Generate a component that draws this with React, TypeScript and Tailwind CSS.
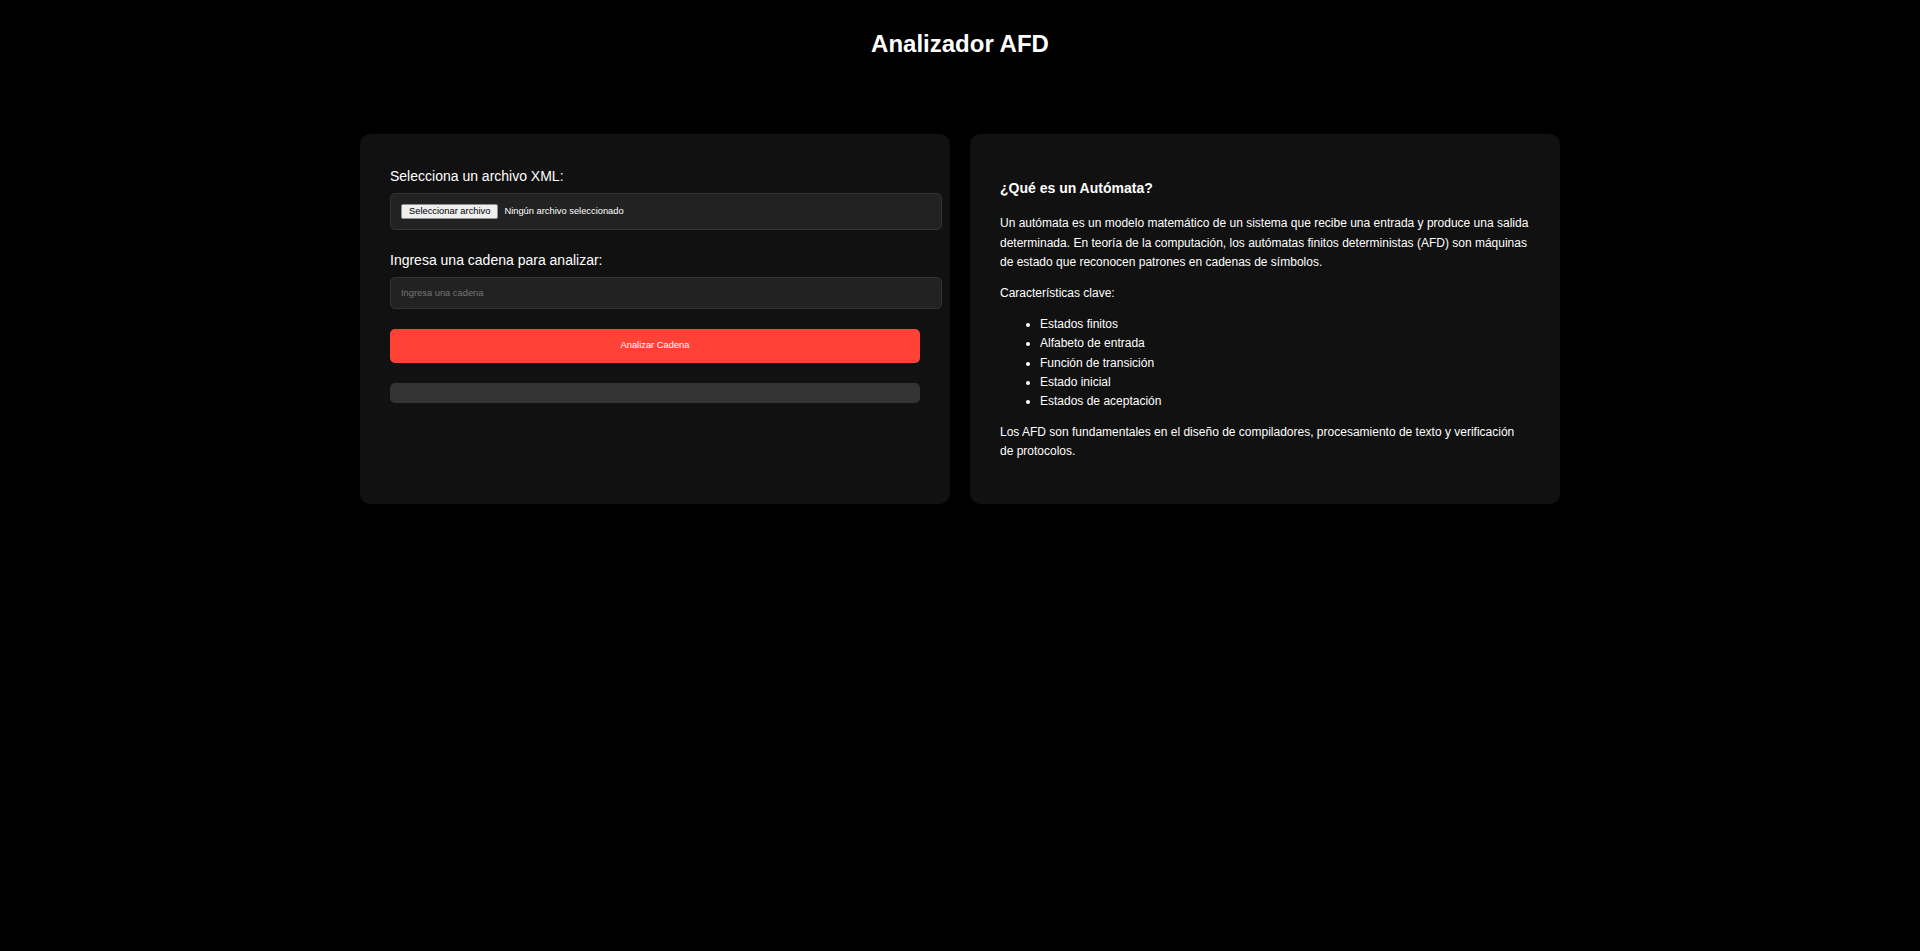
import { useState } from "react";

const features = [
  "Estados finitos",
  "Alfabeto de entrada",
  "Función de transición",
  "Estado inicial",
  "Estados de aceptación",
];

export default function App() {
  const [fileName, setFileName] = useState<string | null>(null);
  const [cadena, setCadena] = useState("");

  return (
    <div className="min-h-screen bg-black text-white font-['Liberation_Sans',Arial,sans-serif]">
      <h1 className="pt-[30px] text-center text-[24px] leading-[28px] font-bold">
        Analizador AFD
      </h1>

      <div className="mx-auto mt-[76px] grid max-w-[1200px] grid-cols-2 gap-[20px]">
        {/* Formulario */}
        <div className="rounded-[10px] bg-[#111111] px-[30px] pt-[32px] pb-[30px]">
          <div className="mb-[20px]">
            <label className="mb-[6px] block text-[14px] leading-[21px]">
              Selecciona un archivo XML:
            </label>
            <label className="box-border flex h-[37px] w-[552px] cursor-pointer items-center rounded-[5px] border border-[#333333] bg-[#222222] px-[10px]">
              <input
                type="file"
                accept=".xml"
                className="hidden"
                onChange={(e) => setFileName(e.target.files?.[0]?.name ?? null)}
              />
              <span className="mr-[6px] box-border flex h-[15px] items-center rounded-[2px] border border-[#8f8f8f] bg-[#efefef] px-[7px] text-[9.33px] leading-none text-black">
                Seleccionar archivo
              </span>
              <span className="text-[9.33px] leading-none text-white">
                {fileName ?? "Ningún archivo seleccionado"}
              </span>
            </label>
          </div>

          <div className="mb-[20px]">
            <label className="mb-[6px] block text-[14px] leading-[21px]">
              Ingresa una cadena para analizar:
            </label>
            <input
              type="text"
              value={cadena}
              onChange={(e) => setCadena(e.target.value)}
              placeholder="Ingresa una cadena"
              className="box-border block h-[32px] w-[552px] rounded-[5px] border border-[#333333] bg-[#222222] px-[10px] text-[9.33px] text-white outline-none placeholder:text-[#757575]"
            />
          </div>

          <button className="block h-[34px] w-full cursor-pointer rounded-[5px] bg-[#ff4136] text-[9.33px] text-white">
            Analizar Cadena
          </button>

          <div className="mt-[20px] h-[20px] rounded-[5px] bg-[#333333]" />
        </div>

        {/* Información */}
        <div className="rounded-[10px] bg-[#111111] px-[30px] pt-[30px] pb-[30px] text-[12px] leading-[19.2px]">
          <h3 className="mt-[13px] mb-[15px] text-[14px] leading-[22.4px] font-bold">
            ¿Qué es un Autómata?
          </h3>
          <p className="my-[12px]">
            Un autómata es un modelo matemático de un sistema que recibe una entrada y
            produce una salida determinada. En teoría de la computación, los autómatas
            finitos deterministas (AFD) son máquinas de estado que reconocen patrones en
            cadenas de símbolos.
          </p>
          <p className="my-[12px]">Características clave:</p>
          <ul className="my-[12px] list-disc pl-[40px]">
            {features.map((f) => (
              <li key={f}>{f}</li>
            ))}
          </ul>
          <p className="mt-[12px] mb-[12px]">
            Los AFD son fundamentales en el diseño de compiladores, procesamiento de texto y
            verificación de protocolos.
          </p>
        </div>
      </div>
    </div>
  );
}
